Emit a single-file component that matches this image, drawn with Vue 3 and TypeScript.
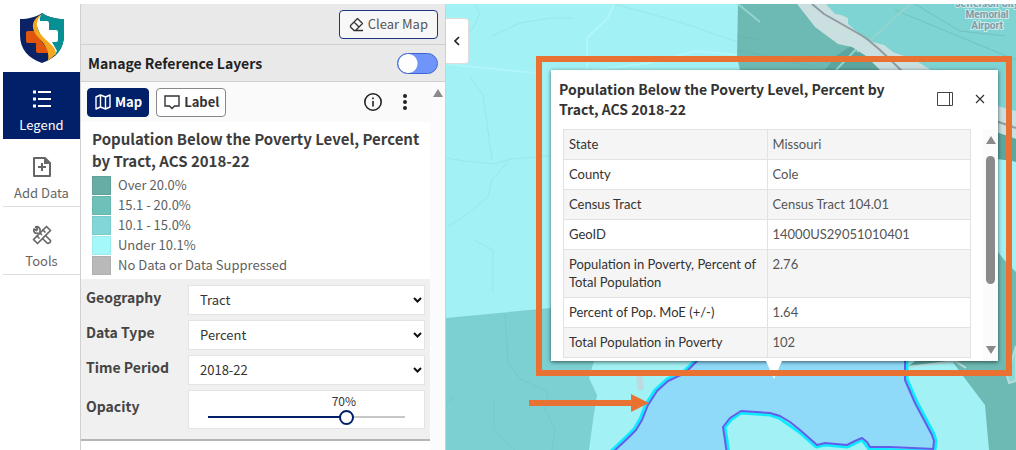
<script setup lang="ts">
import { ref } from 'vue'

interface LegendEntry { label: string; color: string }
interface Field { id: string; label: string; options: string[]; value: string }
interface Row { name: string; value: string }

const legend: LegendEntry[] = [
  { label: 'Over 20.0%', color: '#67aca5' },
  { label: '15.1 - 20.0%', color: '#6ec1b9' },
  { label: '10.1 - 15.0%', color: '#82d6d7' },
  { label: 'Under 10.1%', color: '#a5f8fa' },
  { label: 'No Data or Data Suppressed', color: '#b9b9b9' },
]

const fields = ref<Field[]>([
  { id: 'geography', label: 'Geography', options: ['Tract'], value: 'Tract' },
  { id: 'data-type', label: 'Data Type', options: ['Percent'], value: 'Percent' },
  { id: 'period', label: 'Time Period', options: ['2018-22'], value: '2018-22' },
])

const rows: Row[] = [
  { name: 'State', value: 'Missouri' },
  { name: 'County', value: 'Cole' },
  { name: 'Census Tract', value: 'Census Tract 104.01' },
  { name: 'GeoID', value: '14000US29051010401' },
  { name: 'Population in Poverty, Percent of Total Population', value: '2.76' },
  { name: 'Percent of Pop. MoE (+/-)', value: '1.64' },
  { name: 'Total Population in Poverty', value: '102' },
]

const opacity = ref(70)
const showReference = ref(false)
</script>

<template>
  <div class="app">
    <nav class="rail">
      <div class="logo">
        <svg width="46" height="52" viewBox="0 0 46 52" role="img" aria-label="Shield logo">
          <defs>
            <clipPath id="shield"><path d="M23 1C17 5 9 7 1 7V23C1 37 9 46 23 51C37 46 45 37 45 23V7C37 7 29 5 23 1Z" /></clipPath>
          </defs>
          <g clip-path="url(#shield)">
            <rect width="46" height="52" fill="#0b2265" />
            <path d="M23 0H46V52H36V40L20 24L16 12Z" fill="#079093" />
            <path d="M22 3C18 6 17 8 17 12L22 24L36 42L38 39L33 30H37Q39 30 39 28V20Q39 18 37 18H30V11Q30 9 28 9H21Q20 6 22 3Z" fill="#fff" />
            <path d="M14 19H17C19 26 25 33 30 38V39Q30 41 28 41H19Q17 41 17 39V31H9Q7 31 7 29V21Q7 19 9 19Z" fill="#e0560f" />
            <path d="M23 2C13 7 11 15 18 24C24 31 31 36 29 49L37 42C37 35 30 31 24 25C17 17 15 10 23 2Z" fill="#f5a81c" />
          </g>
        </svg>
      </div>
      <button class="tab active" type="button">
        <svg width="20" height="20" viewBox="0 0 20 20" fill="none" stroke="currentColor" stroke-width="2"><path d="M6 3H19M6 10H19M6 17H19" /><path d="M1 3H4M1 10H4M1 17H4" stroke-width="3" /></svg>
        Legend
      </button>
      <button class="tab" type="button">
        <svg width="20" height="20" viewBox="0 0 20 20" fill="none" stroke="currentColor" stroke-width="2"><path d="M2 1H13L18 6V19H2Z" stroke-linejoin="round" /><path d="M10 6V14M6 10H14" /><path d="M12 1L18 7H12Z" fill="currentColor" stroke="none" /></svg>
        Add Data
      </button>
      <button class="tab" type="button">
        <svg width="20" height="20" viewBox="0 0 20 20" fill="none" stroke="currentColor" stroke-width="1.700" stroke-linejoin="round" stroke-linecap="round"><path d="M1.500 14.500L14.500 1.500L18.500 5.500L5.500 18.500Z" /><path d="M5 11L7 13M8 8L9.500 9.500M11 5L13 7" /><path d="M8 6.500C9 3 6 1 3.500 2L5.500 4L4.500 5.500L2 4C1 6.500 3 9 6 8" /><path d="M14 11L18.500 15.500M11 14L15 18C17 19 19 17 18.500 15.500" /></svg>
        Tools
      </button>
    </nav>

    <aside class="panel">
      <div class="clear-row">
        <button class="outline clear" type="button">
          <svg width="15" height="15" viewBox="0 0 15 15" fill="none" stroke="currentColor" stroke-width="1.300" stroke-linejoin="round"><path d="M1.500 8.500L8.500 1.500L13.500 6.500L6.500 13.500H5L1.500 10ZM5 5L10 10M6 13.500H14" /></svg>
          Clear Map
        </button>
      </div>
      <div class="reference-row">
        <label for="reference">Manage Reference Layers</label>
        <input id="reference" v-model="showReference" class="switch" type="checkbox" role="switch">
      </div>
      <div class="scroller">
        <div class="layer">
          <div class="toolbar">
            <button class="outline solid" type="button">
              <svg width="16" height="16" viewBox="0 0 16 16" fill="none" stroke="currentColor" stroke-width="1.400" stroke-linejoin="round"><path d="M1 3L5.500 1L10.500 3L15 1V13L10.500 15L5.500 13L1 15ZM5.500 1V13M10.500 3V15" /></svg>
              Map
            </button>
            <button class="outline" type="button">
              <svg width="16" height="16" viewBox="0 0 16 16" fill="none" stroke="currentColor" stroke-width="1.400"><path d="M1 2H15V12H10.500L8 14.500L5.500 12H1Z" /></svg>
              Label
            </button>
            <span class="spacer"></span>
            <button class="icon" type="button" aria-label="Layer information">
              <svg width="20" height="20" viewBox="0 0 20 20" fill="none" stroke="#222" stroke-width="1.600"><circle cx="10" cy="10" r="8.200" /><path d="M10 9V14.500M10 5.500V7.300" /></svg>
            </button>
            <button class="icon" type="button" aria-label="More options">
              <svg width="20" height="20" viewBox="0 0 20 20" fill="#222"><circle cx="10" cy="4" r="2" /><circle cx="10" cy="10" r="2" /><circle cx="10" cy="16" r="2" /></svg>
            </button>
          </div>
          <h2>Population Below the Poverty Level, Percent by Tract, ACS 2018-22</h2>
          <ul class="legend">
            <li v-for="entry in legend" :key="entry.label">
              <span class="swatch" :style="{ background: entry.color }"></span>{{ entry.label }}
            </li>
          </ul>
          <form class="settings" @submit.prevent>
            <template v-for="field in fields" :key="field.id">
              <label :for="field.id">{{ field.label }}</label>
              <span class="select-box">
                <select :id="field.id" v-model="field.value">
                  <option v-for="option in field.options" :key="option">{{ option }}</option>
                </select>
                <svg width="9" height="6" viewBox="0 0 9 6" fill="none" stroke="#111" stroke-width="2"><path d="M1 1L4.500 4.500L8 1" /></svg>
              </span>
            </template>
            <label for="opacity">Opacity</label>
            <div class="slider">
              <div class="track">
                <output for="opacity" :style="{ left: opacity + '%' }">{{ opacity }}%</output>
                <span class="fill" :style="{ width: opacity + '%' }"></span>
                <input id="opacity" v-model="opacity" type="range" min="0" max="100">
              </div>
            </div>
          </form>
        </div>
        <div class="scrollbar" aria-hidden="true"><span class="up"></span></div>
      </div>
    </aside>

    <main class="map">
      <svg class="canvas" viewBox="446 4 570 446" preserveAspectRatio="xMinYMin slice" aria-hidden="true">
        <rect x="446" y="4" width="570" height="446" fill="#a2f1f4" />
        <g fill="none" stroke="#98e7ea" stroke-width="1">
          <path d="M475 4L480 13L473 28L468 34M492 36L520 23L550 18L572 18M614 4L680 22L738 42M446 158L465 161L494 164L510 159L550 156M510 159L492 180L488 197L462 218L448 226M470 77L483 95L492 160" />
          <path d="M474 240L493 250V292" />
        </g>
        <path d="M614 4L608 18L587 38V70M446 64L535 73M592 70L650 63L695 51L738 55" fill="none" stroke="#b0f6f8" stroke-width="2" />
        <path d="M738 4H1016V160H740V70L737 57Z" fill="#6cbab3" />
        <path d="M820 4H1016V120H900Z" fill="#7ed3d3" />
        <path d="M852 45L836 56L820 76H900L876 60Z" fill="#5da69f" />
        <path d="M738 50L810 66L835 61H860M738 36L760 40M915 4L960 31L1005 36M895 10L1016 60" fill="none" stroke="#69aead" stroke-width="1" opacity=".5" />
        <path d="M738 4L760 22M867 38L836 70M910 4L857 52" fill="none" stroke="#93d4cf" stroke-width="2" />
        <path d="M797 4L808 18L815 27L838 44L852 47L866 56L882 72H934L915 60L893 52L884 45L866 40L848 24V18L841 15L835 14L826 4Z" fill="#c9dfe0" />
        <path d="M812 4L824 14L847 27L866 38L880 50L903 72" fill="none" stroke="#929b9d" stroke-width="2" />
        <path d="M990 104L1016 111V139L990 130Z" fill="#c9dfe0" />
        <path d="M990 119L1016 128" fill="none" stroke="#929b9d" stroke-width="2" />
        <path d="M990 130L1016 139V162L990 157Z" fill="#5da69f" />
        <path d="M990 158L1016 162V272L1006 262L990 242Z" fill="#a2f1f4" />
        <path d="M990 242L1006 262L1016 272V450H989L985 405L960 372L950 358H990Z" fill="#6cbab3" />
        <path d="M1016 346L1007 376L1009 383L1016 381Z" fill="#8bd9d6" stroke="#b8dcdb" stroke-width="2" />
        <path d="M908 366L920 358H955L958 361Z" fill="#5da69f" />
        <path d="M908 367L955 361L966 368" fill="none" stroke="#b8dcdb" stroke-width="2" />
        <path d="M446 318L551 308H596V361L594 361L589 378L597 395L593 420L589 450H446Z" fill="#7cd0d1" />
        <path d="M505 314L508 362L520 379L548 392L545 410L555 428L552 450M494 400V430L515 450M446 403L455 397" fill="none" stroke="#75c9ca" stroke-width="1" />
        <path d="M639 375L641 390" stroke="#bed9df" stroke-width="6" />
        <path d="M700 355L697 361L685 373L668 381L657 391L648 405L642 420L636 430L628 438L610 455H728L725 440L723 427L730 418L741 411L750 412L770 413L780 416L790 422L800 430L817 445L825 443L847 445L855 441L862 438L867 442L870 447L890 447L934 449V441L932 435L915 403L905 380V355Z" fill="#8fd9f9" />
        <g fill="none" stroke-linejoin="round">
          <g stroke="#0eeaff" stroke-width="3">
            <path d="M697 359L684 371L667 379L655 390L646 404L640 419L634 429L626 437L609 453" />
            <path d="M907 355V379L917 402L934 434L936 441L935 450" />
            <path d="M729 455L727 440L725 427L732 419L741 413L770 415L779 418L799 432L816 447L825 445L848 447L862 440L869 449L933 451" />
          </g>
          <g stroke="#655cea" stroke-width="2">
            <path d="M700 358L685 373L668 381L657 391L648 405L642 420L636 430L628 438L612 453" />
            <path d="M905 355V380L915 403L932 435L934 441L933 450" />
            <path d="M727 455L725 440L723 427L730 418L741 411L770 413L780 416L790 422L800 430L817 445L825 443L847 445L855 441L862 438L867 442L870 447L890 447L934 449" />
          </g>
        </g>
        <g class="place" text-anchor="middle">
          <text x="987" y="7">Jefferson City</text>
          <text x="987" y="18">Memorial</text>
          <text x="987" y="29">Airport</text>
        </g>
        <path d="M529 400H631V394L649 403L631 412V406H529Z" fill="#e97132" />
      </svg>

      <button class="collapse" type="button" aria-label="Collapse panel">
        <svg width="8" height="10" viewBox="0 0 8 10" fill="none" stroke="#222" stroke-width="1.700"><path d="M6 1L2 5L6 9" /></svg>
      </button>

      <div class="callout">
        <span class="pointer"></span>
        <section class="popup">
          <header>
            <h3>Population Below the Poverty Level, Percent by Tract, ACS 2018-22</h3>
            <button class="icon" type="button" aria-label="Dock">
              <svg width="16" height="14" viewBox="0 0 16 14" fill="none" stroke="#444"><path d="M.5 .5H15.500V13.500H.5ZM12.500 .5V13.500" /></svg>
            </button>
            <button class="icon" type="button" aria-label="Close">
              <svg width="10" height="10" viewBox="0 0 10 10" fill="none" stroke="#333" stroke-width="1.200"><path d="M1 1L9 9M9 1L1 9" /></svg>
            </button>
          </header>
          <div class="body">
            <table>
              <tbody>
                <tr v-for="row in rows" :key="row.name">
                  <th scope="row">{{ row.name }}</th>
                  <td>{{ row.value }}</td>
                </tr>
              </tbody>
            </table>
            <div class="scrollbar" aria-hidden="true"><span class="up"></span><span class="thumb"></span><span class="down"></span></div>
          </div>
        </section>
      </div>
    </main>
  </div>
</template>

<style>
body { margin: 0; background: #fff; }
</style>

<style scoped>
* { box-sizing: border-box; }
.app {
  display: flex;
  min-height: 100vh;
  padding: 4px 0 0 3px;
  font: 13px/20px "Noto Sans CJK SC", "Noto Sans", sans-serif;
  color: #333;
}
button, select { font: inherit; color: inherit; margin: 0; }
svg { display: block; flex: none; }

.rail { flex: none; width: 77px; }
.logo { display: flex; justify-content: center; height: 68px; padding-top: 8px; }
.tab {
  display: flex;
  flex-direction: column;
  align-items: center;
  gap: 6px;
  width: 100%;
  height: 68px;
  padding: 18px 0 0;
  border: 0;
  border-bottom: 1px solid #ddd;
  background: #fff;
  color: #666;
}
.tab.active { height: 67px; padding-top: 17px; background: #02206a; color: #fff; border-color: #02206a; }

.panel {
  display: flex;
  flex-direction: column;
  flex: none;
  width: 366px;
  border: solid #d0d0d0;
  border-width: 0 1px;
}
.clear-row, .reference-row {
  display: flex;
  align-items: center;
  background: #e9e9e9;
  border-bottom: 1px solid #d0d0d0;
  padding: 0 7px;
}
.clear-row { justify-content: flex-end; height: 41px; }
.reference-row { justify-content: space-between; height: 37px; font-size: 14px; font-weight: 700; color: #222; }
.outline {
  display: flex;
  align-items: center;
  gap: 4px;
  height: 29px;
  padding: 0 6px 0 7px;
  border: 1px solid #888;
  border-radius: 4px;
  background: #fff;
  font-weight: 700;
}
.outline.clear { border-color: #1f347e; background: #f7f7f7; font-weight: 400; color: #555; padding: 0 9px; }
.outline.clear svg { color: #333; }
.outline.solid { background: #02206a; border-color: #02206a; color: #fff; }
.switch {
  appearance: none;
  width: 41px;
  height: 21px;
  margin: 0;
  border: 1px solid #3d63d0;
  border-radius: 11px;
  background: radial-gradient(circle at 10px 50%, #fff 9px, #6f95fb 10px);
}
.scroller { display: flex; flex: 1; }
.layer { flex: 1; min-width: 0; }
.scrollbar { flex: none; width: 15px; background: #fbfbfb; display: flex; flex-direction: column; align-items: center; }
.up, .down { border: 5px solid transparent; width: 0; height: 0; }
.up { border-top: 0; border-bottom: 8px solid #8a8a8a; }
.down { border-bottom: 0; border-top: 8px solid #8a8a8a; }
.panel .scrollbar { padding-top: 7px; }
.toolbar { display: flex; align-items: center; gap: 7px; height: 40px; padding: 0 15px 0 6px; background: #fafafa; }
.spacer { flex: 1; }
.icon { display: flex; padding: 0; border: 0; background: none; }
.toolbar .icon + .icon { margin-left: 5px; }
h2, h3 { margin: 0; font-weight: 700; }
h2 { padding: 6px 4px 3px 11px; font-size: 15px; line-height: 22px; color: #3d3d3d; }
.legend { margin: 0; padding: 0 11px 4px; list-style: none; color: #5f5f5f; }
.legend li { display: flex; align-items: center; gap: 7px; height: 20px; }
.swatch { width: 19px; height: 19px; border: 1px solid #0000000d; }
.settings {
  display: grid;
  grid-template-columns: 97px 1fr;
  gap: 5px;
  padding: 6px 5px 10px;
  background: #f0f0f0;
  border-bottom: 2px solid #b5b5b5;
}
.settings label { font-size: 14px; font-weight: 700; color: #444; padding-top: 2px; }
.settings label[for="opacity"] { padding-top: 6px; }
.select-box { display: grid; align-items: center; }
.select-box > * { grid-area: 1 / 1; }
.select-box svg { justify-self: end; margin-right: 3px; pointer-events: none; }
select { appearance: none; width: 100%; height: 30px; padding: 0 11px; border: 1px solid #e3e3e3; border-radius: 0; background: #fff; }
.slider { height: 39px; padding: 0 19px; border: 1px solid #e3e3e3; background: #fff; }
.track { position: relative; height: 100%; background: linear-gradient(#c8c8c8, #c8c8c8) 0 25px / 100% 2px no-repeat; }
.track output { position: absolute; top: 2px; transform: translateX(-50%); font: 12px/16px "Noto Sans CJK SC", sans-serif; margin-left: -2px; }
.fill { position: absolute; left: 0; top: 25px; height: 2px; background: #02206a; }
.track input { position: absolute; left: -7px; bottom: 3px; width: calc(100% + 15px); height: 16px; margin: 0; appearance: none; background: none; }
.track input::-webkit-slider-thumb { appearance: none; width: 15px; height: 15px; border: 2px solid #02206a; border-radius: 50%; background: #fff; }

.map { position: relative; flex: 1; min-width: 0; overflow: hidden; }
.canvas { position: absolute; inset: 0; width: 100%; height: 100%; }
.place text { font: 700 10px Roboto, sans-serif; fill: #7f9ba6; stroke: #c9ecee; stroke-width: 2px; paint-order: stroke; }
.collapse {
  position: absolute;
  left: 0;
  top: 14px;
  display: flex;
  align-items: center;
  justify-content: center;
  width: 23px;
  height: 46px;
  padding: 0;
  border: 1px solid #ddd;
  border-left: 0;
  border-radius: 0 4px 4px 0;
  background: #fff;
}
.callout { position: absolute; left: 90px; top: 52px; right: 4px; padding: 14px 14px 15px 15px; }
.callout::after { content: ""; position: absolute; inset: 0; border: 6px solid #e97132; pointer-events: none; }
.pointer {
  position: absolute;
  left: 50%;
  bottom: -3px;
  width: 16px;
  height: 18px;
  margin-left: -8px;
  background: #fff;
  clip-path: polygon(0 0, 100% 0, 50% 100%);
}
.popup { display: flex; flex-direction: column; height: 291px; background: #fff; box-shadow: 0 1px 4px #0009; }
header { display: flex; align-items: center; padding: 9px 13px 10px 8px; }
h3 { flex: 1; font-size: 14px; line-height: 20px; color: #333; padding-right: 48px; }
header .icon + .icon { margin-left: 22px; }
.body { display: flex; flex: 1; min-height: 0; overflow: hidden; padding-left: 12px; }
table { flex: 1; align-self: flex-start; border-collapse: collapse; table-layout: fixed; font: 13px/18px Lato, sans-serif; }
th, td { padding: 5px 5px 6px; border: 1px solid #e2e2e2; text-align: left; vertical-align: top; font-weight: 400; }
th { width: 50%; color: #323232; }
td { color: #555; }
tr:nth-child(odd) { background: #f5f5f5; }
.body .scrollbar { margin-left: 12px; padding: 7px 0; }
.thumb { flex: none; width: 9px; height: 128px; margin: 12px 0 auto; border-radius: 5px; background: #8a8a8a; }
</style>
